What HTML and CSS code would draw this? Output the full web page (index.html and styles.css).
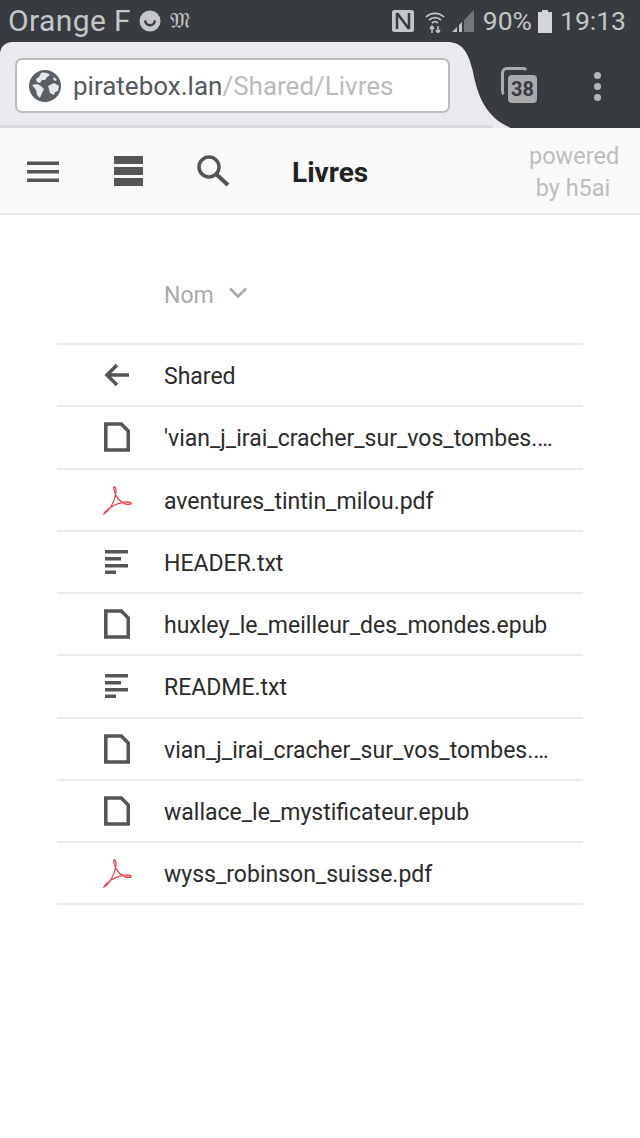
FILE: index.html
```
<!DOCTYPE html>
<html lang="fr">
<head>
<meta charset="utf-8">
<title>Livres</title>
<link rel="stylesheet" href="styles.css">
</head>
<body>
<div class="status">
  <span class="carrier">Orange F</span>
  <svg class="st-smile" width="22" height="22" viewBox="0 0 22 22"><circle cx="11" cy="11" r="10.5" fill="#c4c6c7"/><path d="M5 10.500a6 6 0 0 0 12 0h-2.500a3.500 3.500 0 0 1-7 0z" fill="#383c40"/></svg>
  <span class="st-m">𝔐</span>
  <span class="st-spacer"></span>
  <svg class="st-nfc" width="22" height="22" viewBox="0 0 22 22"><rect x="0" y="0" width="22" height="22" rx="2.500" fill="#c4c6c7"/><path d="M5 3v16M17 3v16M5 3l12 16" fill="none" stroke="#383c40" stroke-width="2.500"/></svg>
  <svg class="st-wifi" width="20" height="24" viewBox="0 0 20 24"><path d="M1 8a13 13 0 0 1 18 0M4 11a9 9 0 0 1 12 0M7 14a4.500 4.500 0 0 1 6 0" fill="none" stroke="#c4c6c7" stroke-width="1.700"/><path d="M7 24v-6M5 20l2-3 2 3M13 17v6M11 21l2 3 2-3" fill="none" stroke="#c4c6c7" stroke-width="1.500"/></svg>
  <svg class="st-signal" width="22" height="22" viewBox="0 0 22 22"><path d="M22 0v22H12V10z" fill="#74777a"/><path d="M10 12v10H7v-7zM5 17v5H0z" fill="#c4c6c7"/></svg>
  <span class="st-text st-pct">90%</span>
  <svg class="st-bat" width="14" height="23" viewBox="0 0 14 23"><path d="M4 0h6v2h4v21H0V2h4z" fill="#d4d6d7"/></svg>
  <span class="st-text st-time">19:13</span>
</div>
<div class="browser">
  <div class="tab">
    <div class="urlbar">
      <svg class="globe" width="32" height="32" viewBox="0 0 32 32"><circle cx="16" cy="16" r="16" fill="#5b6066"/><path d="M12 3c4-1 7 0 9 2l-3 2-2 3-3 0-2 3-3-1-1-3 3-2zM3 15l5-1 4 2 3 3-2 4-2 5-3-3-1-5zM19 16l6-3 5 3-1 5-3 1-1 3-4-2-1-4zM25 7l3 3-2 1-2-2z" fill="#e8e9ea"/></svg>
      <span class="url"><span class="url-host">piratebox.lan</span><span class="url-path">/Shared/Livres</span></span>
    </div>
    <svg class="tab-curve" width="70" height="86" viewBox="0 0 70 86"><path d="M0 0h6c14 0 21 8 26 30 5 26 14 46 38 56H0z" fill="#e9e9ee"/></svg>
  </div>
  <div class="tabs-count">
    <span class="tc-back"></span>
    <span class="tc-front">38</span>
  </div>
  <div class="kebab"><i></i><i></i><i></i></div>
  <div class="browser-line"></div>
</div>
<div class="topbar">
  <svg class="ic-menu" width="34" height="24" viewBox="0 0 34 24"><path d="M1 1.500h32v3.500H1zM1 10h32v3.500H1zM1 18.500h32v3.500H1z" fill="#555"/></svg>
  <svg class="ic-list" width="30" height="30" viewBox="0 0 30 30"><path d="M1 0h29v8H1zM1 11h29v8H1zM1 22h29v8H1z" fill="#555"/></svg>
  <svg class="ic-search" width="34" height="34" viewBox="0 0 34 34"><circle cx="13" cy="13" r="10" fill="none" stroke="#555" stroke-width="3.500"/><path d="M20 20l12 11" stroke="#555" stroke-width="4"/></svg>
  <span class="title">Livres</span>
  <span class="powered">powered<br>by h5ai</span>
</div>
<main class="listing">
  <div class="header-row"><span class="col-icon"></span><span class="col-name">Nom</span><svg class="sort" width="20" height="12" viewBox="0 0 20 12"><path d="M2 1.500l8 8 8-8" fill="none" stroke="#aaa" stroke-width="2.500"/></svg></div>
  <div class="row"><span class="col-icon"><svg width="28" height="24" viewBox="0 0 28 24"><path d="M26 12H5M14 2L4 12l10 10" fill="none" stroke="#555" stroke-width="3.500"/></svg></span><span class="name">Shared</span></div>
  <div class="row"><span class="col-icon"><svg class="i-file" width="26" height="30" viewBox="0 0 26 30"><use href="#file"/></svg></span><span class="name">'vian_j_irai_cracher_sur_vos_tombes.…</span></div>
  <div class="row"><span class="col-icon"><svg width="32" height="32" viewBox="0 0 32 32"><use href="#pdf"/></svg></span><span class="name">aventures_tintin_milou.pdf</span></div>
  <div class="row"><span class="col-icon"><svg width="24" height="24" viewBox="0 0 24 24"><use href="#txt"/></svg></span><span class="name">HEADER.txt</span></div>
  <div class="row"><span class="col-icon"><svg class="i-file" width="26" height="30" viewBox="0 0 26 30"><use href="#file"/></svg></span><span class="name">huxley_le_meilleur_des_mondes.epub</span></div>
  <div class="row"><span class="col-icon"><svg width="24" height="24" viewBox="0 0 24 24"><use href="#txt"/></svg></span><span class="name">README.txt</span></div>
  <div class="row"><span class="col-icon"><svg class="i-file" width="26" height="30" viewBox="0 0 26 30"><use href="#file"/></svg></span><span class="name">vian_j_irai_cracher_sur_vos_tombes.…</span></div>
  <div class="row"><span class="col-icon"><svg class="i-file" width="26" height="30" viewBox="0 0 26 30"><use href="#file"/></svg></span><span class="name">wallace_le_mystificateur.epub</span></div>
  <div class="row"><span class="col-icon"><svg width="32" height="32" viewBox="0 0 32 32"><use href="#pdf"/></svg></span><span class="name">wyss_robinson_suisse.pdf</span></div>
</main>
<svg class="defs" width="0" height="0">
  <defs>
    <g id="file"><path d="M1.800 2h15.500l7 7v19H1.800z" fill="none" stroke="#555" stroke-width="3.600"/></g>
    <g id="txt"><path d="M0 0h23v3.500H0zM0 7h16v3.500H0zM0 14h23v3.500H0zM0 20.500h11V24H0z" fill="#555"/></g>
    <g id="pdf"><path d="M3 30C8 27 14 18 15 8 15 2 12 1 13 6 14 12 19 18 24 20 28 21 31 20 30 19 27 17 18 18 10 23 6 26 3 29 3 30z" fill="none" stroke="#ea4a50" stroke-width="1.300"/></g>
  </defs>
</svg>
</body>
</html>
```
FILE: styles.css
```
* { box-sizing: border-box; }
html, body { margin: 0; padding: 0; background: #fff; }
body { width: 640px; height: 1138px; overflow: hidden; font-family: Roboto, "Liberation Sans", sans-serif; color: #222; }
.status { height: 42px; background: #383c40; display: flex; align-items: center; padding: 0 14px 0 8px; color: #c4c6c7; }
.carrier { font-size: 30px; line-height: 42px; letter-spacing: .4px; }
.st-smile { margin-left: 8px; }
.st-m { font-family: "DejaVu Serif", serif; font-size: 22px; margin-left: 9px; line-height: 22px; }
.st-spacer { flex: 1; }
.st-nfc { margin-right: 11px; }
.st-wifi { margin-right: 7px; }
.st-signal { margin-right: 9px; }
.st-text { font-size: 26.500px; line-height: 44px; }
.st-bat { margin: 0 8px 0 6px; }
.browser { height: 86px; background: #383c40; position: relative; display: flex; align-items: flex-start; }
.tab { width: 442px; height: 86px; position: relative; background: #e9e9ee; border-top-left-radius: 12px; padding: 16px 0 0 15px; }
.tab-curve { position: absolute; left: 441px; top: 0; }
.urlbar { width: 435px; height: 55px; background: #fff; border: 2px solid #bdbdbd; border-radius: 7px; display: flex; align-items: center; padding-left: 12px; position: relative; z-index: 1; }
.globe { flex: none; }
.url { font-size: 26px; margin-left: 12px; white-space: nowrap; padding-top: 1px; }
.url-host { color: #55595e; }
.url-path { color: #bcbcbc; }
.tabs-count { position: absolute; left: 500px; top: 25px; width: 38px; height: 38px; }
.tc-back { position: absolute; left: 1px; top: 0; width: 28px; height: 30px; border: 3px solid #a9abac; border-right-color: transparent; border-bottom-color: transparent; border-radius: 6px; }
.tc-front { position: absolute; left: 8px; top: 8px; width: 29px; height: 28px; background: #a9abac; border-radius: 4px; color: #383c40; font-size: 20px; font-weight: 700; line-height: 28px; text-align: center; }
.kebab { position: absolute; left: 594px; top: 30px; display: flex; flex-direction: column; gap: 4px; }
.kebab i { display: block; width: 7px; height: 7px; border-radius: 50%; background: #b4b6b7; }
.browser-line { position: absolute; left: 0; right: 0; bottom: 0; height: 3px; background: #d9d9de; clip-path: polygon(0 0, 77% 0, 77% 100%, 0 100%); }
.topbar { height: 87px; background: #fafafa; border-bottom: 2px solid #ececec; display: flex; align-items: center; position: relative; }
.ic-menu { margin: 2px 0 0 26px; }
.ic-list { margin: 0 0 0 53px; }
.ic-search { margin: 0 0 0 53px; }
.title { font-size: 28px; font-weight: 700; color: #222; margin-left: 62px; padding-top: 3px; }
.powered { position: absolute; left: 529px; top: 12px; width: 88px; font-size: 23.500px; line-height: 32px; color: #bdbdbd; text-align: center; }
.listing { margin: 0 57px; padding-top: 49px; }
.header-row { height: 81px; display: flex; align-items: center; border-bottom: 2px solid #ececec; padding-bottom: 16px; }
.col-icon { width: 107px; flex: none; display: flex; justify-content: center; padding-left: 13px; }
.col-name { font-size: 23px; color: #aaa; }
.sort { margin-left: 14px; margin-top: -5px; }
.row { height: 62.250px; display: flex; align-items: center; border-bottom: 2px solid #ececec; }
.name { font-size: 23px; color: #2b2b2b; white-space: nowrap; padding-top: 3px; }
.defs { position: absolute; }
```
